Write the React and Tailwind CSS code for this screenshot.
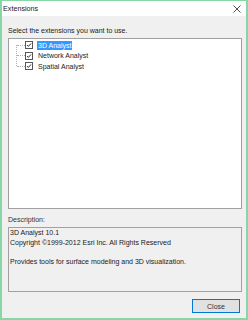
import React from 'react';

const font = { fontFamily: '"Liberation Sans", Arial, sans-serif' };

function CheckBox() {
  return (
    <svg width="8" height="8" viewBox="0 0 8 8" className="block shrink-0">
      <rect x="0.5" y="0.5" width="7" height="7" fill="#fff" stroke="#555" />
      <path d="M2 4.1 L3.3 5.4 L6 2.5" fill="none" stroke="#222" strokeWidth="1" />
    </svg>
  );
}

const items = [
  { label: '3D Analyst', selected: true },
  { label: 'Network Analyst' },
  { label: 'Spatial Analyst' },
];

export default function App() {
  return (
    <div
      className="w-[248px] h-[320px] flex flex-col border-x-2 border-t border-b-2 border-[#86d6a6] bg-[#f0f0f0] text-[7px] leading-[9px] text-[#1a1a1a]"
      style={font}
    >
      {/* Title bar */}
      <div className="h-[15px] shrink-0 bg-white flex items-center justify-between pl-[1px] pr-[5px]">
        <span className="text-[7.2px]">Extensions</span>
        <svg width="8" height="8" viewBox="0 0 8 8">
          <path d="M0.5 0.5 L7.5 7.5 M7.5 0.5 L0.5 7.5" stroke="#222" strokeWidth="0.8" />
        </svg>
      </div>

      <div className="flex flex-col pl-[6px]">
        <div className="mt-[10px] h-[9px]">Select the extensions you want to use.</div>

        {/* Extension list */}
        <div className="mt-[3px] w-[234px] h-[171px] bg-white border border-[#a0a0a0] pt-[1px]">
          <div className="relative">
            <div className="absolute left-[7px] top-[5px] h-[21px] border-l border-dotted border-[#b0b0b0]" />
            {items.map((it) => (
              <div key={it.label} className="h-[10.5px] flex items-center">
                <div className="w-[8px] ml-[8px] border-t border-dotted border-[#b0b0b0]" />
                <CheckBox />
                <span
                  className={
                    'ml-[4px] px-[1px] h-[9px] flex items-center ' +
                    (it.selected ? 'bg-[#3399ff] text-white' : '')
                  }
                >
                  {it.label}
                </span>
              </div>
            ))}
          </div>
        </div>

        <div className="mt-[6px] h-[9px] text-[#333]">Description:</div>

        {/* Description */}
        <div className="mt-[3px] w-[234px] h-[65px] border border-[#a0a0a0] pl-[1px] leading-[9.5px]">
          <div>3D Analyst 10.1</div>
          <div>Copyright ©1999-2012 Esri Inc. All Rights Reserved</div>
          <div>&nbsp;</div>
          <div>Provides tools for surface modeling and 3D visualization.</div>
        </div>

        <div className="mt-[7px] w-[234px] flex justify-end pr-[2px]">
          <button className="w-[48px] h-[14px] border border-[#0078d7] bg-[#e1e1e1] text-[7px] text-[#333] flex items-center justify-center">
            Close
          </button>
        </div>
      </div>
    </div>
  );
}
